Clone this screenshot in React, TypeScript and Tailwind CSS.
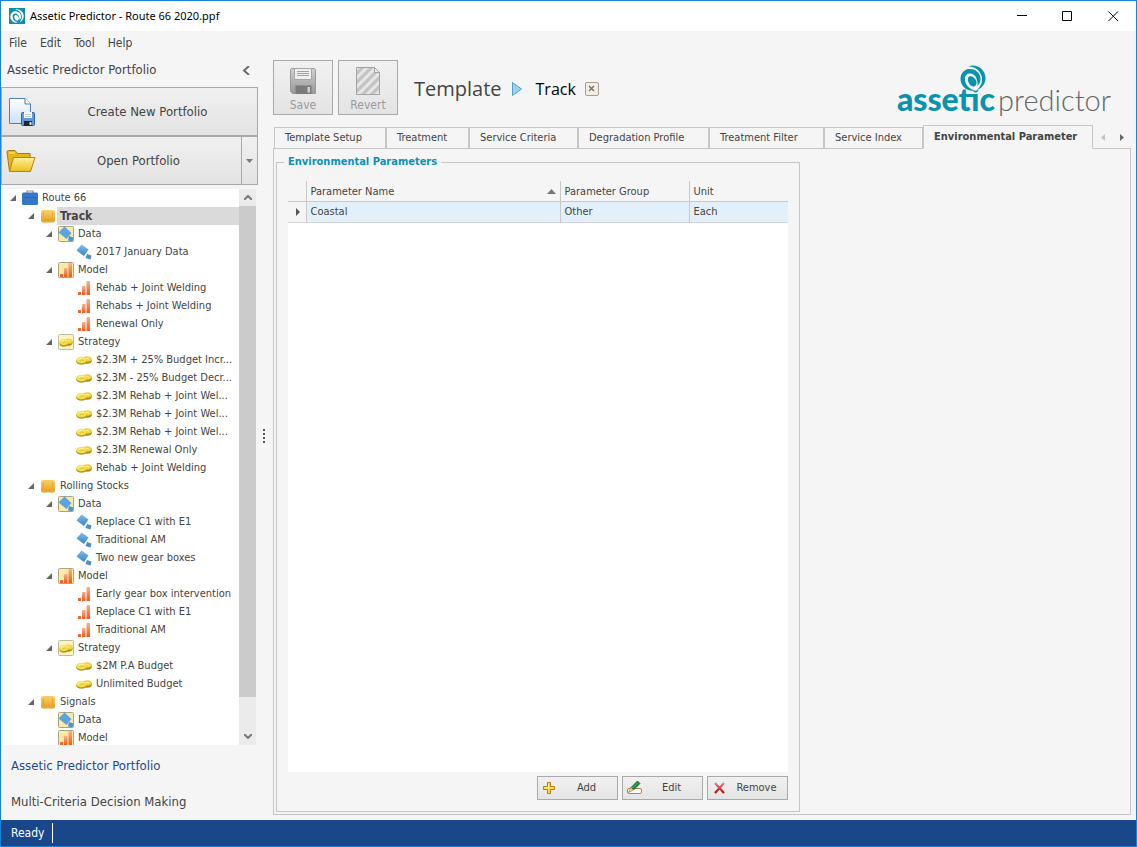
import { useState } from 'react';

type IconName = 'case' | 'box' | 'data' | 'dataItem' | 'model' | 'modelItem' | 'strategy' | 'strategyItem';

interface TreeNode {
  level: number;
  icon: IconName;
  label: string;
  open?: boolean;
  selected?: boolean;
}

const nodes: TreeNode[] = [
  { level: 0, icon: 'case', label: 'Route 66', open: true },
  { level: 1, icon: 'box', label: 'Track', open: true, selected: true },
  { level: 2, icon: 'data', label: 'Data', open: true },
  { level: 3, icon: 'dataItem', label: '2017 January Data' },
  { level: 2, icon: 'model', label: 'Model', open: true },
  { level: 3, icon: 'modelItem', label: 'Rehab + Joint Welding' },
  { level: 3, icon: 'modelItem', label: 'Rehabs + Joint Welding' },
  { level: 3, icon: 'modelItem', label: 'Renewal Only' },
  { level: 2, icon: 'strategy', label: 'Strategy', open: true },
  { level: 3, icon: 'strategyItem', label: '$2.3M + 25% Budget Incr...' },
  { level: 3, icon: 'strategyItem', label: '$2.3M - 25% Budget Decr...' },
  { level: 3, icon: 'strategyItem', label: '$2.3M Rehab + Joint Wel...' },
  { level: 3, icon: 'strategyItem', label: '$2.3M Rehab + Joint Wel...' },
  { level: 3, icon: 'strategyItem', label: '$2.3M Rehab + Joint Wel...' },
  { level: 3, icon: 'strategyItem', label: '$2.3M Renewal Only' },
  { level: 3, icon: 'strategyItem', label: 'Rehab + Joint Welding' },
  { level: 1, icon: 'box', label: 'Rolling Stocks', open: true },
  { level: 2, icon: 'data', label: 'Data', open: true },
  { level: 3, icon: 'dataItem', label: 'Replace C1 with E1' },
  { level: 3, icon: 'dataItem', label: 'Traditional AM' },
  { level: 3, icon: 'dataItem', label: 'Two new gear boxes' },
  { level: 2, icon: 'model', label: 'Model', open: true },
  { level: 3, icon: 'modelItem', label: 'Early gear box intervention' },
  { level: 3, icon: 'modelItem', label: 'Replace C1 with E1' },
  { level: 3, icon: 'modelItem', label: 'Traditional AM' },
  { level: 2, icon: 'strategy', label: 'Strategy', open: true },
  { level: 3, icon: 'strategyItem', label: '$2M P.A Budget' },
  { level: 3, icon: 'strategyItem', label: 'Unlimited Budget' },
  { level: 1, icon: 'box', label: 'Signals', open: true },
  { level: 2, icon: 'data', label: 'Data' },
  { level: 2, icon: 'model', label: 'Model' },
];

const indents = ['pl-[7px]', 'pl-[25px]', 'pl-[43px]', 'pl-[61px]'];

const tabs = [
  { label: 'Template Setup', width: 'w-[112px]' },
  { label: 'Treatment', width: 'w-[83px]' },
  { label: 'Service Criteria', width: 'w-[109px]' },
  { label: 'Degradation Profile', width: 'w-[131px]' },
  { label: 'Treatment Filter', width: 'w-[115px]' },
  { label: 'Service Index', width: 'w-[99px]' },
  { label: 'Environmental Parameter', width: 'w-[170px]' },
];

function Swirl({ className, color }: { className: string; color: string }) {
  return (
    <svg viewBox="0 0 26 26" className={className} fill={color}>
      <path d="M8 1.500C16-2 25.500 4 25.500 13C25.500 19 22 23 17 25C21.500 20.500 23 16 21.500 11C19.500 4.500 14 1 8 1.500Z" />
      <path d="M15 25.500C7 27 .5 21 .5 14C.5 8.500 4 4.500 9 4C15.500 3.500 20.500 8 20.500 14C20.500 17 19.500 19 17.500 20.500C18 14 15 8.500 10 8.500C6.500 8.500 4.500 11 5 15C5.500 20 9 24 15 25.500Z" />
      <path d="M9 11.500C12 10 17 14 16.500 18C16.300 20.500 15 22 13 21.500C9.500 21 6 14.500 9 11.500Z" />
    </svg>
  );
}

function Bars() {
  return (
    <>
      <rect x="2" y="12" width="3" height="3" rx=".5" fill="#f0642c" />
      <rect x="6" y="6" width="3.500" height="9" rx=".5" fill="url(#bar)" />
      <rect x="10.500" y="1" width="3.500" height="14" rx=".5" fill="url(#bar)" />
    </>
  );
}

function Coins() {
  return (
    <>
      <ellipse cx="11" cy="8.500" rx="4.800" ry="3.300" fill="#a98a16" />
      <ellipse cx="11" cy="7" rx="4.800" ry="2.800" fill="#edd440" />
      <ellipse cx="5.500" cy="9.500" rx="5.300" ry="3.300" fill="#b8951b" />
      <ellipse cx="5.500" cy="8" rx="5.300" ry="3.200" fill="#f7e04c" />
      <path d="M2 7.500Q5 5 8 7M10 6L13 7" stroke="#fff6a0" fill="none" />
      <path d="M4 9.500L6 7.500L8 9" stroke="#c9a82a" fill="none" strokeWidth=".7" />
    </>
  );
}

function TreeIcon({ name }: { name: IconName }) {
  return (
    <svg viewBox="0 0 16 16" className="h-4 w-4 shrink-0">
      {name === 'case' && (
        <>
          <path d="M5 3V1H11V3" fill="none" stroke="#8b9298" strokeWidth="1.200" />
          <rect y="2.500" width="16" height="12.500" rx="1.500" fill="#3577c6" />
          <path d="M1 7.500H15" stroke="#2f69b2" />
        </>
      )}
      {name === 'box' && (
        <>
          <rect x="1" y="2" width="14" height="12.500" rx="2" fill="url(#gold)" />
          <path d="M3.500 4V11.500H12.500V4" stroke="#e19a1d" strokeWidth=".5" fill="none" />
        </>
      )}
      {name === 'data' && (
        <>
          <rect x=".5" y=".5" width="15" height="15" rx="1" fill="#fbeba0" stroke="#aaa28a" />
          <path d="M6.500 .5L13.500 7L8.500 13L.5 6.500Z" fill="#5aa5e0" />
          <path d="M11 10L15.500 11.500L14.500 15.500L10 14.500Z" fill="#4a95d4" />
        </>
      )}
      {name === 'dataItem' && (
        <>
          <path d="M5.500 .5L12.500 5.500L8 12L.5 6.500Z" fill="url(#sky)" />
          <path d="M11 10L15.500 11.500L14.500 15.500L9.500 14Z" fill="#468fc9" />
        </>
      )}
      {name === 'model' && (
        <>
          <rect x=".5" y=".5" width="15" height="15" rx="1" fill="#fbeba0" stroke="#aaa28a" />
          <Bars />
        </>
      )}
      {name === 'modelItem' && <Bars />}
      {name === 'strategy' && (
        <>
          <rect x=".5" y=".5" width="15" height="15" rx="1" fill="#fdf4c4" stroke="#c0b99f" />
          <g transform="translate(1.200 .5) scale(.85 .95)">
            <Coins />
          </g>
        </>
      )}
      {name === 'strategyItem' && <Coins />}
    </svg>
  );
}

function TitleBar() {
  return (
    <header className="flex h-[30px] shrink-0 items-center bg-white pl-2">
      <span className="flex h-4 w-4 items-center justify-center bg-[#0a8fa8]">
        <Swirl className="h-3.5 w-3.5" color="#ffffff" />
      </span>
      <h1 className="ml-[5px] flex-1 font-['Noto_Sans','Open_Sans',sans-serif] text-[11px] text-black">
        Assetic Predictor - Route 66 2020.ppf
      </h1>
      <button aria-label="Minimize" className="flex h-full w-[46px] items-center justify-center">
        <svg className="h-[11px] w-[11px]" stroke="#000" fill="none"><path d="M0 4.500H10" /></svg>
      </button>
      <button aria-label="Maximize" className="flex h-full w-[45px] items-center justify-center">
        <svg className="h-[11px] w-[11px]" stroke="#000" fill="none"><path d="M.5 .5H9.500V9.500H.5Z" /></svg>
      </button>
      <button aria-label="Close" className="flex h-full w-[46px] items-center justify-center">
        <svg className="h-[11px] w-[11px]" stroke="#000" fill="none"><path d="M.5 .5L10 10M10 .5L.5 10" /></svg>
      </button>
    </header>
  );
}

function Sidebar() {
  const [selected, setSelected] = useState(nodes.findIndex((n) => n.selected));

  return (
    <aside className="flex w-[257px] shrink-0 flex-col">
      <div className="flex h-8 shrink-0 items-center justify-between pb-0.5 pl-1.5 pr-2 text-[13px]">
        <h2>Assetic Predictor Portfolio</h2>
        <button aria-label="Collapse panel">
          <svg className="h-[9px] w-2" stroke="#6b6b6b" strokeWidth="2" fill="none"><path d="M7 0L2 4.500L7 9" /></svg>
        </button>
      </div>
      <button className="flex h-[49px] shrink-0 items-center border border-[#a9a9a9] bg-linear-to-b from-[#f0f0f0] to-[#e3e3e3] pl-1.5 text-[13px]">
        <svg viewBox="0 0 28 30" className="h-[30px] w-7">
          <path d="M1.500 1.500H17L22.500 7V26.500H1.500Z" fill="url(#paper)" stroke="#4d7fc0" />
          <path d="M17 1.500V7H22.500" fill="#fff" stroke="#4d7fc0" />
          <rect x="13.500" y="15.500" width="13" height="13" rx="1" fill="#5c9bd8" stroke="#2e639f" />
          <path d="M16 15H24V21H16Z" fill="#f4f8fc" />
          <path d="M17 17.500H23M17 19.500H23" stroke="#c1c9d1" />
          <path d="M16 24H24V29H16Z" fill="#20262d" />
          <path d="M21.500 25H23.500V28H21.500Z" fill="#dbe4ec" />
        </svg>
        <span className="flex-1 pl-0.5 text-center">Create New Portfolio</span>
      </button>
      <div className="flex h-[49px] shrink-0 border border-[#a9a9a9] bg-linear-to-b from-[#f0f0f0] to-[#e3e3e3] text-[13px]">
        <button className="flex flex-1 items-center pl-1">
          <svg viewBox="0 0 30 24" className="h-6 w-[30px]">
            <path d="M1 3Q1 1.500 2.500 1.500H9L11.500 4.500H24V22.500H3.500Z" fill="#e8b41c" stroke="#a87a08" />
            <path d="M3 4H9" stroke="#fff0a0" />
            <path d="M7.500 8.500H29L24.500 22.500H3.500Z" fill="url(#folder)" stroke="#b5840b" />
          </svg>
          <span className="flex-1 text-center">Open Portfolio</span>
        </button>
        <button aria-label="Recent portfolios" className="flex w-4 items-center justify-center border-l border-[#a9a9a9]">
          <svg className="h-1 w-[7px]" fill="#777"><path d="M0 0H7L3.500 4Z" /></svg>
        </button>
      </div>
      <div className="mx-0.5 mt-1 flex min-h-0 flex-1 bg-white">
        <ul role="tree" className="min-w-0 flex-1 overflow-hidden">
          {nodes.map((node, i) => (
            <li
              key={i}
              role="treeitem"
              aria-selected={i === selected}
              onClick={() => setSelected(i)}
              className={`flex h-[18px] items-center ${indents[node.level]}`}
            >
              <span className="mr-1 w-2 shrink-0">
                {node.open && (
                  <svg className="h-1.5 w-1.5" fill="#666"><path d="M6 0V6H0Z" /></svg>
                )}
              </span>
              <TreeIcon name={node.icon} />
              <span
                className={`ml-px flex-1 pl-[3px] leading-[18px] whitespace-nowrap ${i === selected ? 'bg-[#dadada] text-[12px] font-bold' : ''}`}
              >
                {node.label}
              </span>
            </li>
          ))}
        </ul>
        <div className="flex w-[17px] shrink-0 flex-col bg-[#ebebeb]">
          <button aria-label="Scroll up" className="flex h-[17px] items-center justify-center">
            <svg className="h-[5px] w-2" stroke="#777" strokeWidth="2" fill="none"><path d="M0 5L4 1L8 5" /></svg>
          </button>
          <div className="flex-1">
            <div className="h-[94%] bg-[#cbcbcb]" />
          </div>
          <button aria-label="Scroll down" className="flex h-[17px] items-center justify-center">
            <svg className="h-[5px] w-2" stroke="#777" strokeWidth="2" fill="none"><path d="M0 0L4 4L8 0" /></svg>
          </button>
        </div>
      </div>
      <nav className="flex shrink-0 flex-col pt-[3px] text-[13px]">
        <a href="#portfolio" className="flex h-9 items-center pl-2.5 text-[#1a4a8c]">Assetic Predictor Portfolio</a>
        <a href="#mcdm" className="flex h-9 items-center pl-2.5">Multi-Criteria Decision Making</a>
      </nav>
    </aside>
  );
}

function Toolbar() {
  return (
    <div className="flex shrink-0 items-start pt-[5px]">
      <button className="flex h-[55px] w-[60px] flex-col items-center border border-[#a9a9a9] bg-linear-to-b from-[#f1f1f1] to-[#e4e4e4] pt-1.5 text-[12px] leading-4 text-[#9b9b9b]">
        <svg viewBox="0 0 28 30" className="h-[30px] w-7">
          <path d="M2.500 1.500H25.500L26.500 2.500V26.500H3.500L1.500 24.500V2.500Z" fill="url(#steel)" stroke="#999" />
          <path d="M5.500 1.500H22.500V12.500H5.500Z" fill="#efefef" stroke="#a5a5a5" />
          <path d="M8 4.500H20M8 6.500H20M8 8.500H20" stroke="#a3a3a3" />
          <path d="M6.500 18.500H22.500V27H6.500Z" fill="#7b7b7b" />
          <path d="M18.500 20H21V25.500H18.500Z" fill="#cfcfcf" />
        </svg>
        Save
      </button>
      <button className="ml-[5px] flex h-[55px] w-[60px] flex-col items-center border border-[#a9a9a9] bg-linear-to-b from-[#f1f1f1] to-[#e4e4e4] pt-1.5 text-[12px] leading-4 text-[#9b9b9b]">
        <svg viewBox="0 0 28 30" className="h-[30px] w-7">
          <clipPath id="sheet"><path d="M3 1H20L26 6V28H3Z" /></clipPath>
          <g clipPath="url(#sheet)">
            <path d="M3 1H27V28H3Z" fill="#e6e6e6" />
            <path d="M0 9L12-3M0 18L20-2M0 27L28-1M4 32L30 6M13 32L30 15M22 32L30 24" stroke="#c3c3c3" strokeWidth="3.200" />
          </g>
          <path d="M2.500 .5H20.500L25.500 5.500V27.500H2.500Z" fill="none" stroke="#a3a3a3" />
          <path d="M20.500 .5V5.500H25.500Z" fill="#eee" stroke="#a3a3a3" />
        </svg>
        Revert
      </button>
      <div className="ml-4 flex h-[55px] items-center pt-0.5">
        <h2 className="font-['Open_Sans','Noto_Sans',sans-serif] text-[20px]">Template</h2>
        <svg viewBox="0 0 10 14" className="ml-2.5 h-3.5 w-2.5"><path d="M.5 .5V13.500L9.500 7Z" fill="#9fd0ec" stroke="#4d9fce" /></svg>
        <span className="ml-3.5 font-['Open_Sans','Noto_Sans',sans-serif] text-[16px] text-black">Track</span>
        <button aria-label="Close Track" className="ml-[9px] flex h-3.5 w-3.5 items-center justify-center rounded-[2px] border border-[#a59d8e] bg-[#f3eee4]">
          <svg className="h-[7px] w-[7px]" stroke="#75695c" fill="none"><path d="M1 1L6 6M6 1L1 6" strokeWidth="1.300" /></svg>
        </button>
      </div>
      <div className="relative ml-auto mr-5 flex h-[60px] items-baseline pt-5 font-['Lato',sans-serif] text-[32px] leading-[38px]">
        <span className="font-black text-[#0a93ad]">assetic</span>
        <span className="ml-[3px] text-[29px] font-light text-[#666]">predictor</span>
        <span className="absolute left-[63px] top-[5px] rounded-b-full bg-[#f5f5f5]">
          <Swirl className="h-[26px] w-[26px]" color="#0a93ad" />
        </span>
      </div>
    </div>
  );
}

function ParameterTable() {
  return (
    <div className="min-h-0 flex-1 bg-white">
      <table className="w-full table-fixed border-collapse text-left">
        <colgroup>
          <col className="w-[18px]" />
          <col />
          <col className="w-[129px]" />
          <col className="w-[99px]" />
        </colgroup>
        <thead>
          <tr className="h-5 border-b border-[#c8c8c8] bg-[#f5f5f5]">
            <td />
            <th className="border-l border-[#c8c8c8] pl-1 pt-0.5 font-normal">
              <span className="flex items-center justify-between pr-1">
                Parameter Name
                <svg className="h-[5px] w-[9px]" fill="#777"><path d="M4.500 0L9 5H0Z" /></svg>
              </span>
            </th>
            <th className="border-l border-[#c8c8c8] pl-1 pt-0.5 font-normal">Parameter Group</th>
            <th className="border-l border-[#c8c8c8] pl-1 pt-0.5 font-normal">Unit</th>
          </tr>
        </thead>
        <tbody>
          <tr className="h-[21px] border-b border-[#d0d5d9] bg-[#e3f0fa]">
            <td className="bg-[#f5f5f5]">
              <svg className="ml-2 h-2 w-1" fill="#555"><path d="M0 0L4 4L0 8Z" /></svg>
            </td>
            <td className="border-l border-[#c8c8c8] pl-1 pt-0.5">Coastal</td>
            <td className="border-l border-[#c8c8c8] pl-1 pt-0.5">Other</td>
            <td className="border-l border-[#c8c8c8] pl-1 pt-0.5">Each</td>
          </tr>
        </tbody>
      </table>
    </div>
  );
}

const actionClass =
  'flex h-6 w-[81px] items-center border border-[#a9a9a9] bg-linear-to-b from-[#f1f1f1] to-[#e4e4e4] pl-1';

function Actions() {
  return (
    <div className="flex shrink-0 justify-end gap-1 pt-1">
      <button className={actionClass}>
        <svg viewBox="0 0 16 16" className="h-4 w-4">
          <path d="M5.500 2.500H8.500V6.500H12.500V9.500H8.500V13.500H5.500V9.500H1.500V6.500H5.500Z" fill="#fbd84b" stroke="#b07f12" />
          <path d="M6.500 4V7.500H3" stroke="#fff2ac" fill="none" />
        </svg>
        <span className="flex-1 pr-0.5 text-center">Add</span>
      </button>
      <button className={actionClass}>
        <svg viewBox="0 0 16 16" className="h-4 w-4">
          <rect x=".5" y="8.500" width="14" height="5" rx="1.500" fill="#fff" stroke="#c97a35" />
          <path d="M4 7.500L10.500 1L13 3.500L6.500 10Z" fill="#14853a" stroke="#0b5f27" strokeWidth=".7" />
          <path d="M4 7.500L6.500 10L1.500 12.500Z" fill="#edd39b" stroke="#8a6a36" strokeWidth=".5" />
          <path d="M5.500 8L11 2.500" stroke="#58bd73" />
        </svg>
        <span className="flex-1 pr-0.5 text-center">Edit</span>
      </button>
      <button className={actionClass}>
        <svg viewBox="0 0 16 16" className="h-4 w-4">
          <path d="M3 3L12 13M12 3L3 13" stroke="url(#red)" strokeWidth="2.200" fill="none" />
        </svg>
        <span className="flex-1 pr-0.5 text-center">Remove</span>
      </button>
    </div>
  );
}

function Gradients() {
  const defs = [
    ['bar', '#f9b28f', '#ea5a1d'],
    ['gold', '#fbd06a', '#e8a024'],
    ['sky', '#7fbdea', '#3585c8'],
    ['paper', '#ffffff', '#c9e1f8'],
    ['folder', '#fff29a', '#eebd1b'],
    ['steel', '#d0d0d0', '#989898'],
    ['red', '#f08080', '#a80f14'],
  ];
  return (
    <svg className="absolute h-0 w-0" aria-hidden="true">
      {defs.map(([id, from, to]) => (
        <linearGradient key={id} id={id} x1="0" y1="0" x2="0" y2="1">
          <stop offset="0" stopColor={from} />
          <stop offset="1" stopColor={to} />
        </linearGradient>
      ))}
    </svg>
  );
}

export default function App() {
  const [activeTab, setActiveTab] = useState('Environmental Parameter');

  return (
    <div className="flex h-screen flex-col border border-[#1883d7] bg-[#f5f5f5] font-['DejaVu_Sans_Condensed','DejaVu_Sans',sans-serif] text-[11px] text-[#444]">
      <Gradients />
      <TitleBar />
      <nav className="flex h-6 shrink-0 items-center gap-[13px] pl-2 text-[12px]">
        {['File', 'Edit', 'Tool', 'Help'].map((item) => (
          <button key={item}>{item}</button>
        ))}
      </nav>
      <div className="flex min-h-0 flex-1">
        <Sidebar />
        <div className="flex w-[15px] shrink-0 flex-col items-center justify-center gap-0.5 pb-1 pr-[3px]">
          <span className="h-0.5 w-0.5 bg-[#555]" />
          <span className="h-0.5 w-0.5 bg-[#555]" />
          <span className="h-0.5 w-0.5 bg-[#555]" />
          <span className="h-0.5 w-0.5 bg-[#555]" />
        </div>
        <main className="flex min-w-0 flex-1 flex-col pb-[5px] pr-[5px]">
          <Toolbar />
          <div role="tablist" className="relative -mb-px mt-[5px] flex shrink-0 items-end pl-px">
            {tabs.map((tab) => {
              const active = tab.label === activeTab;
              return (
                <button
                  key={tab.label}
                  role="tab"
                  aria-selected={active}
                  onClick={() => setActiveTab(tab.label)}
                  className={`shrink-0 border border-[#c6c6c6] pl-2.5 text-left whitespace-nowrap ${tab.width} ${active ? 'h-6 border-b-[#f5f5f5] font-bold' : 'h-[22px]'}`}
                >
                  {tab.label}
                </button>
              );
            })}
            <div className="flex h-6 flex-1 items-center justify-end gap-[15px] pr-[7px]">
              <button aria-label="Previous tabs">
                <svg className="h-[7px] w-1" fill="#c3c3c3"><path d="M4 0V7L0 3.500Z" /></svg>
              </button>
              <button aria-label="Next tabs">
                <svg className="h-[7px] w-1" fill="#666"><path d="M0 0V7L4 3.500Z" /></svg>
              </button>
            </div>
          </div>
          <section role="tabpanel" className="flex min-h-0 flex-1 border border-[#c6c6c6] px-0.5 pb-0.5 pt-[5px]">
            <fieldset className="flex w-[524px] flex-col border border-[#c6c6c6] px-[11px] pb-[11px]">
              <legend className="-ml-1 px-1 text-[11px] leading-4 font-bold text-[#0a93b5]">Environmental Parameters</legend>
              <div className="flex min-h-0 flex-1 flex-col pt-[11px]">
                <ParameterTable />
                <Actions />
              </div>
            </fieldset>
          </section>
        </main>
      </div>
      <footer className="flex h-[26px] shrink-0 items-center bg-[#1a4789] pl-2.5 text-[12px] text-white">
        Ready
        <span className="ml-2 h-5 w-px bg-white" />
      </footer>
    </div>
  );
}
